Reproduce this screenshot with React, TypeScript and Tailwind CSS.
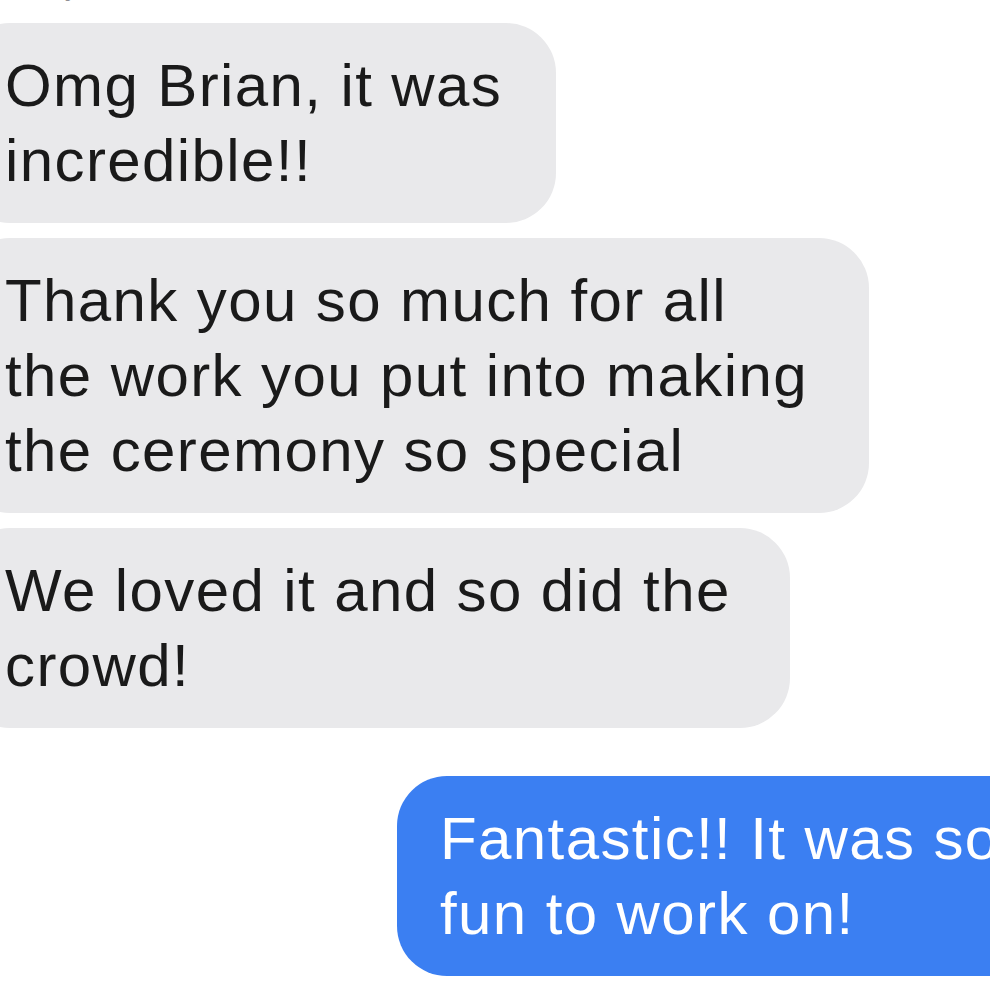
export default function App() {
    return (
        <div className="w-[990px] h-[990px] overflow-hidden bg-white font-['Liberation_Sans',Arial,sans-serif]">
            <div className="mt-[-28px] mb-[23px] h-[28px] pl-[-2px] text-[28px] leading-[28px] tracking-[1px] text-[#8e8e93] whitespace-nowrap">
                Today, 10:24 AM
            </div>
            <div className="flex flex-col gap-[15px] tracking-[1.4px]">
                <div className="ml-[-40px] w-[596px] rounded-[50px] bg-[#e9e9eb] pl-[45px] py-[25px] text-[60px] leading-[75px] text-[#1a1a1a]">
                    Omg Brian, it was
                    <br />
                    incredible!!
                </div>
                <div className="ml-[-40px] w-[909px] rounded-[50px] bg-[#e9e9eb] pl-[45px] py-[25px] text-[60px] leading-[75px] text-[#1a1a1a]">
                    Thank you so much for all
                    <br />
                    the work you put into making
                    <br />
                    the ceremony so special
                </div>
                <div className="ml-[-40px] w-[830px] rounded-[50px] bg-[#e9e9eb] pl-[45px] py-[25px] text-[60px] leading-[75px] text-[#1a1a1a]">
                    We loved it and so did the
                    <br />
                    crowd!
                </div>
            </div>
            <div className="mt-[48px] ml-[397px] w-[700px] rounded-[50px] bg-[#3b7ff2] pl-[43px] py-[25px] text-[60px] leading-[75px] tracking-[1.4px] text-white whitespace-nowrap">
                Fantastic!! It was so
                <br />
                fun to work on!
            </div>
        </div>
    );
}
